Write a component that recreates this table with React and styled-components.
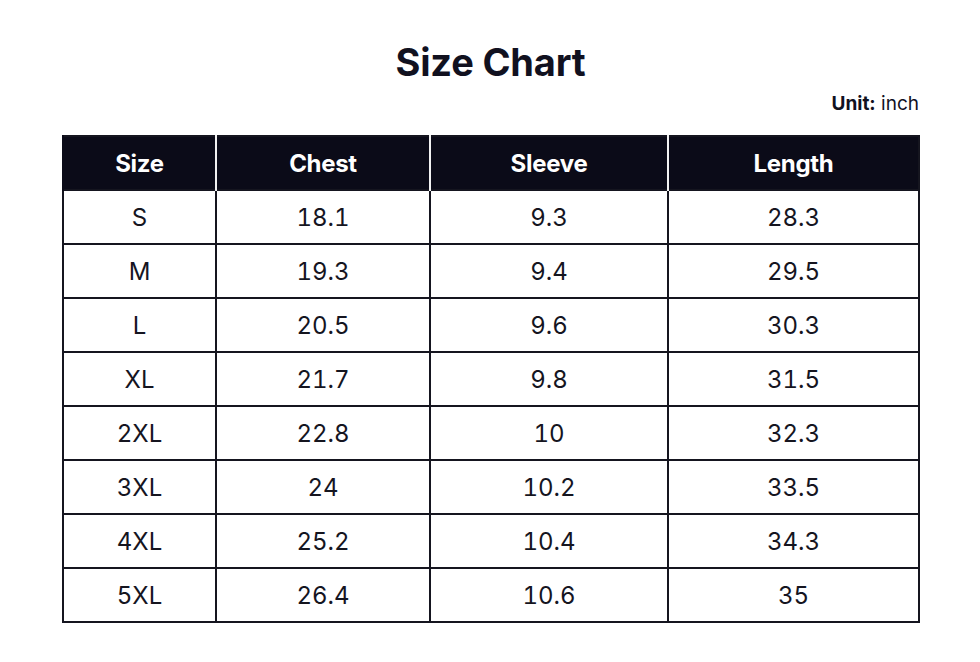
import React from "react";
import styled, { createGlobalStyle } from "styled-components";

const Global = createGlobalStyle`
  html, body { margin: 0; padding: 0; background: #ffffff; }
  body { font-family: Inter, "Noto Sans", "Liberation Sans", sans-serif; color: #0d0d1a; }
`;

const Page = styled.div`
  width: 980px;
  height: 662px;
  box-sizing: border-box;
  padding: 38px 61px 0 62px;
  display: flex;
  flex-direction: column;
`;

const Title = styled.h1`
  margin: 0;
  text-align: center;
  font-size: 38px;
  line-height: 48px;
  font-weight: 700;
  color: #11111f;
  letter-spacing: -0.2px;
`;

const Unit = styled.div`
  margin-top: 6px;
  text-align: right;
  font-size: 19px;
  line-height: 24px;
  color: #11111f;
  & b { font-weight: 700; }
`;

const Table = styled.table`
  margin-top: 19px;
  width: 856px;
  border-collapse: collapse;
  table-layout: fixed;
  border: 2px solid #15151f;
`;

const Th = styled.th`
  background: #0b0b18;
  color: #ffffff;
  height: 52px;
  padding: 0;
  font-size: 24px;
  font-weight: 700;
  text-align: center;
  border-left: 2px solid ${(p) => (p.$first ? "#0b0b18" : "#f2f2f2")};
  letter-spacing: -0.3px;
`;

const Td = styled.td`
  height: 52px;
  padding: 0;
  font-size: 24px;
  font-weight: 400;
  text-align: center;
  border: 2px solid #15151f;
  color: #15151f;
  font-variant-numeric: tabular-nums;
`;

const cols = [
  { name: "Size", w: 153 },
  { name: "Chest", w: 214 },
  { name: "Sleeve", w: 238 },
  { name: "Length", w: 251 },
];

const rows = [
  ["S", "18.1", "9.3", "28.3"],
  ["M", "19.3", "9.4", "29.5"],
  ["L", "20.5", "9.6", "30.3"],
  ["XL", "21.7", "9.8", "31.5"],
  ["2XL", "22.8", "10", "32.3"],
  ["3XL", "24", "10.2", "33.5"],
  ["4XL", "25.2", "10.4", "34.3"],
  ["5XL", "26.4", "10.6", "35"],
];

export default function App() {
  return (
    <>
      <Global />
      <Page>
        <Title>Size Chart</Title>
        <Unit>
          <b>Unit:</b> inch
        </Unit>
        <Table>
          <colgroup>
            {cols.map((c) => (
              <col key={c.name} style={{ width: c.w }} />
            ))}
          </colgroup>
          <thead>
            <tr>
              {cols.map((c, i) => (
                <Th key={c.name} $first={i === 0}>
                  {c.name}
                </Th>
              ))}
            </tr>
          </thead>
          <tbody>
            {rows.map((r) => (
              <tr key={r[0]}>
                {r.map((v, i) => (
                  <Td key={i}>{v}</Td>
                ))}
              </tr>
            ))}
          </tbody>
        </Table>
      </Page>
    </>
  );
}
